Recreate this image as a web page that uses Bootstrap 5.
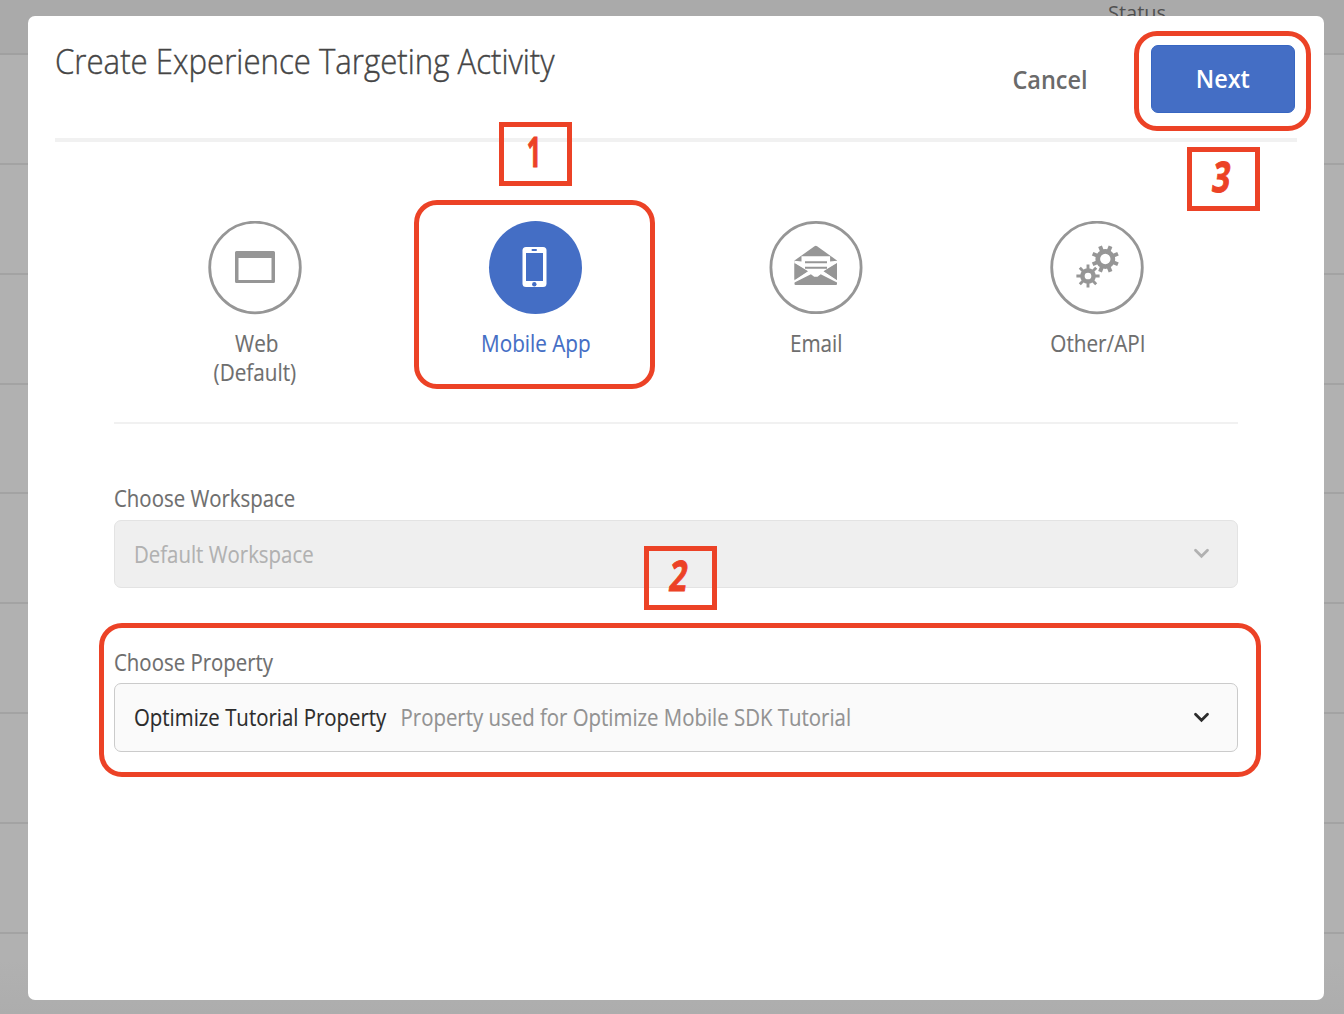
<!DOCTYPE html>
<html lang="en">
<head>
<meta charset="utf-8">
<meta name="viewport" content="width=device-width, initial-scale=1">
<title>Create Experience Targeting Activity</title>
<link href="https://cdn.jsdelivr.net/npm/bootstrap@5.3.0/dist/css/bootstrap.min.css" rel="stylesheet">
<style>
body{font-family:"Open Sans","Noto Sans",sans-serif;font-size:23px;line-height:29px;color:#6e6e6e;background:#b1b1b1;height:1014px;overflow:hidden}
/* dimmed table behind the dialog */
.backdrop-table{inset:0;background:linear-gradient(#b1b1b1 0 960px,#adadad 1014px)}
.backdrop-head{height:55px;background:#aaa;border-bottom:2px solid #a0a0a0;padding-left:1108px;font-size:20px;font-weight:500;line-height:26px;color:#505050}
.backdrop-line{height:109.85px;border-bottom:2px solid #a3a3a3}
.dialog{margin:16px 20px 14px 28px;height:984px;border-radius:7px}
.dialog-head{height:126px;margin:0 27px;border-bottom:4px solid #f1f1f1;padding:29px 2px 0 0}
.narrow{display:inline-block;transform:scaleX(.887);transform-origin:left;white-space:nowrap;-webkit-text-stroke:.12px currentColor}
.narrow-mid{transform-origin:center;transform:scaleX(.9)}
.title{font-size:34px;font-weight:300;line-height:40px;color:#454545;margin-top:-4px;transform:scaleX(.917);-webkit-text-stroke:.4px #454545}
.btn-cancel{font-size:25px;font-weight:600;color:#6a6a6a;margin-right:61px;height:68px;padding:2px 0 0;border:0}
.btn-next{width:144px;height:68px;background:#446ec5;border:1px solid #3766c2;border-radius:7px;font-size:25px;font-weight:600;color:#fff;padding:0}
.btn-cancel .narrow-mid,.btn-next .narrow-mid{transform:scaleX(.94);-webkit-text-stroke:0}
.dialog-main{padding:79px 86px 0}
.types{height:203px;border-bottom:2px solid #f1f1f1}
.type-icon{width:94px;height:94px;margin-bottom:14px;display:block}
.col+.col .type-icon{margin-right:1px}
.picked{color:#446ec5}
.field-label{line-height:30px;margin-top:59px}
.picker{height:68px;margin-top:7px;border:1px solid #e3e3e3;border-radius:7px;background:#efefef;color:#b1b1b1;padding:0 27px 0 19px}
.picker-on{height:69px;margin-top:6px;border-color:#cbcbcb;background:#fafafa;color:#2c2c2c}
.hint{color:#929292;margin-left:16px}
/* step annotations over the dialog */
.ring{border:5px solid #ec4226;border-radius:23px}
.step{border:5px solid #ec4226;width:73px;height:64px;color:#ec4226;font-size:42px;font-weight:700;line-height:47px}
.step span{display:inline-block;transform:translateX(-1px) skewX(-8deg) scaleX(.74);-webkit-text-stroke:1px #ec4226}
.step-a span{transform:translateX(-1px) scaleX(.6)}
.ring-app{left:414px;top:200px;width:241px;height:189px}
.ring-next{left:1134px;top:31px;width:177px;height:100px}
.ring-prop{left:99px;top:623px;width:1162px;height:154px}
.step-a{left:499px;top:122px}
.step-b{left:644px;top:546px}
.step-c{left:1187px;top:147px}
</style>
<script src="https://cdn.jsdelivr.net/npm/bootstrap@5.3.0/dist/js/bootstrap.bundle.min.js"></script>
</head>
<body class="position-relative">
<div class="backdrop-table position-absolute overflow-hidden">
  <div class="backdrop-head">Status</div>
  <div class="backdrop-line"></div><div class="backdrop-line"></div><div class="backdrop-line"></div><div class="backdrop-line"></div>
  <div class="backdrop-line"></div><div class="backdrop-line"></div><div class="backdrop-line"></div><div class="backdrop-line"></div>
</div>
<main class="dialog bg-white position-relative overflow-hidden">
  <header class="dialog-head d-flex align-items-start">
    <h1 class="title narrow mb-0 me-auto">Create Experience Targeting Activity</h1>
    <button class="btn btn-cancel" type="button"><span class="narrow narrow-mid">Cancel</span></button>
    <button class="btn btn-next" type="button"><span class="narrow narrow-mid">Next</span></button>
  </header>
  <div class="dialog-main">
    <div class="types row g-0 text-center">
      <div class="col d-flex flex-column align-items-center">
        <svg class="type-icon" viewBox="0 0 94 94"><circle cx="47" cy="46.500" r="45.300" fill="none" stroke="#969696" stroke-width="2.800"/><path fill="#969696" fill-rule="evenodd" d="M28.500 30h37q1.500 0 1.500 1.500v29q0 1.500-1.500 1.500h-37q-1.500 0-1.500-1.500v-29q0-1.500 1.500-1.500zM30.500 37v22h33V37z"/></svg>
        <span class="narrow narrow-mid">&nbsp;Web</span><span class="narrow narrow-mid">(Default)</span>
      </div>
      <div class="col d-flex flex-column align-items-center picked">
        <svg class="type-icon" viewBox="0 0 94 94"><circle cx="47.500" cy="46.500" r="46.500" fill="#446ec5"/><rect x="34.500" y="26" width="24" height="40" rx="3.500" fill="#fff"/><path fill="#446ec5" d="M38 32h17v28H38z"/><rect x="43.500" y="28" width="5.500" height="2" rx="1" fill="#446ec5"/><circle cx="46.300" cy="63.200" r="2.200" fill="#446ec5"/></svg>
        <span class="narrow narrow-mid">Mobile App</span>
      </div>
      <div class="col d-flex flex-column align-items-center">
        <svg class="type-icon" viewBox="0 0 94 94"><circle cx="47" cy="46.500" r="45.100" fill="none" stroke="#969696" stroke-width="2.800"/>
          <path fill="#969696" d="M25.500 39.500 45.500 25.300q1.300-.9 2.600 0L68 39.500V63q0 1-1 1H26.500q-1 0-1-1z"/>
          <path fill="#fff" d="M32.500 35.300h28.600v5.200l6.900-.8v2.300l-7 4.200-6.500 4 14 9.200v2.400L51.700 53.200 48.500 55.700h-3.300L41.900 53.200 25 61.800v-2.400l14-9.200-6.500-4-7-4.200v-2.300l7 .8z"/>
          <path fill="#969696" d="M25.500 42.600 38.400 50.300 25.500 58.400zM68 42.600 55.200 50.300 68 58.400z"/>
          <path stroke="#969696" stroke-width="2" d="M36 41.300h22M36 46.800h22"/></svg>
        <span class="narrow narrow-mid">Email</span>
      </div>
      <div class="col d-flex flex-column align-items-center">
        <svg class="type-icon" viewBox="0 0 94 94"><circle cx="47" cy="46.500" r="45.300" fill="none" stroke="#969696" stroke-width="2.800"/>
          <g fill="none" stroke="#969696">
            <g transform="translate(55.300 38) rotate(22.500)"><circle r="7.500" stroke-width="4.700"/><path stroke-width="4" d="M0-8.500V-13.700M0 8.500V13.700M8.500 0H13.700M-8.500 0H-13.700M6-6 9.700-9.700M-6-6-9.700-9.700M6 6 9.700 9.700M-6 6-9.700 9.700"/></g>
            <g transform="translate(38 55)"><circle r="5.600" stroke-width="4.500"/><path stroke-width="2.900" d="M0-7V-11.600M0 7V11.600M7 0H11.600M-7 0H-11.600M5-5 8.200-8.200M-5-5-8.200-8.200M5 5 8.200 8.200M-5 5-8.200 8.200"/></g>
          </g></svg>
        <span class="narrow narrow-mid">Other/API</span>
      </div>
    </div>
    <div class="field-label"><span class="narrow">Choose Workspace</span></div>
    <div class="picker d-flex align-items-center justify-content-between">
      <span class="narrow">Default Workspace</span>
      <svg width="17" height="12" viewBox="0 0 17 12" fill="none" stroke="#b1b1b1" stroke-width="2.800" stroke-linecap="round"><path d="M2.500 2.300 8.500 8.300 14.500 2.300"/></svg>
    </div>
    <div class="field-label"><span class="narrow">Choose Property</span></div>
    <div class="picker picker-on d-flex align-items-center justify-content-between">
      <span class="narrow">Optimize Tutorial Property<span class="hint">Property used for Optimize Mobile SDK Tutorial</span></span>
      <svg width="17" height="12" viewBox="0 0 17 12" fill="none" stroke="#2c2c2c" stroke-width="2.800" stroke-linecap="round"><path d="M2.500 2.300 8.500 8.300 14.500 2.300"/></svg>
    </div>
  </div>
</main>
<div class="ring ring-app position-absolute"></div>
<div class="ring ring-next position-absolute"></div>
<div class="ring ring-prop position-absolute"></div>
<div class="step step-a position-absolute text-center"><span>1</span></div>
<div class="step step-b position-absolute text-center"><span>2</span></div>
<div class="step step-c position-absolute text-center"><span>3</span></div>
</body>
</html>
